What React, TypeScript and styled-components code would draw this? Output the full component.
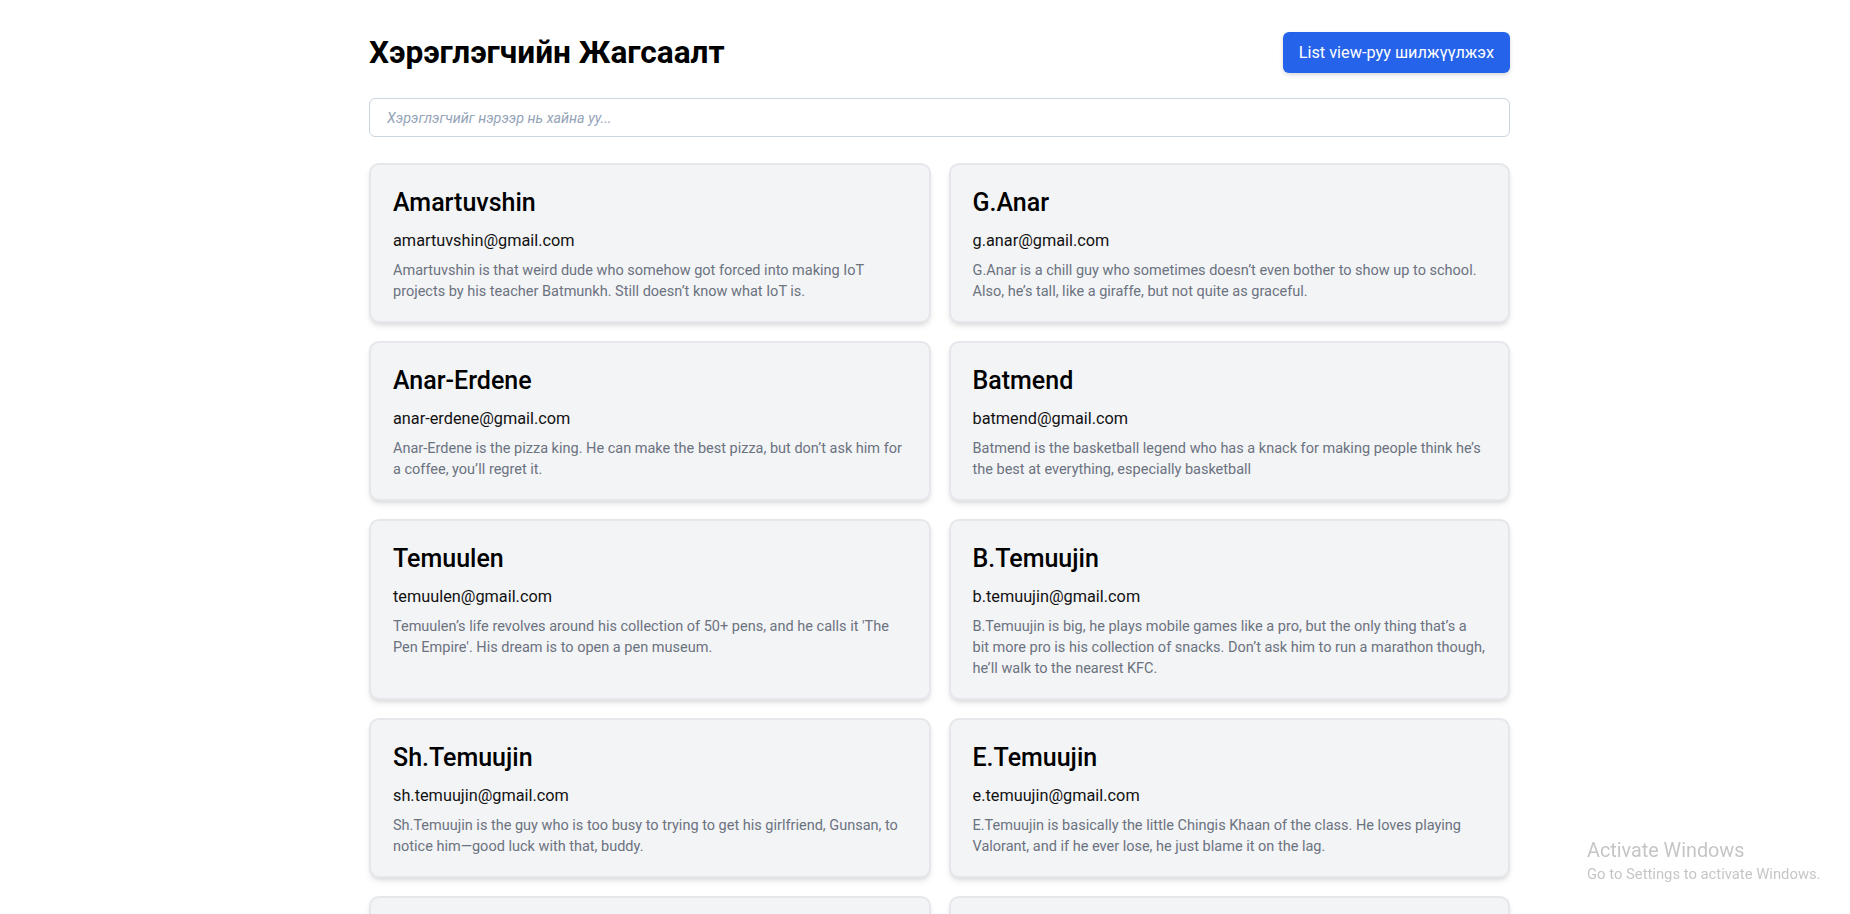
import React from "react";
import styled, { createGlobalStyle } from "styled-components";

const GlobalStyle = createGlobalStyle`
  html, body {
    margin: 0;
    padding: 0;
    background: #ffffff;
    font-family: "Segoe UI", Roboto, "Noto Sans", sans-serif;
    color: #111111;
  }
  * {
    box-sizing: border-box;
  }
`;

const users = [
  {
    name: "Amartuvshin",
    email: "amartuvshin@gmail.com",
    desc: "Amartuvshin is that weird dude who somehow got forced into making IoT projects by his teacher Batmunkh. Still doesn’t know what IoT is.",
  },
  {
    name: "G.Anar",
    email: "g.anar@gmail.com",
    desc: "G.Anar is a chill guy who sometimes doesn’t even bother to show up to school. Also, he’s tall, like a giraffe, but not quite as graceful.",
  },
  {
    name: "Anar-Erdene",
    email: "anar-erdene@gmail.com",
    desc: "Anar-Erdene is the pizza king. He can make the best pizza, but don’t ask him for a coffee, you’ll regret it.",
  },
  {
    name: "Batmend",
    email: "batmend@gmail.com",
    desc: "Batmend is the basketball legend who has a knack for making people think he’s the best at everything, especially basketball",
  },
  {
    name: "Temuulen",
    email: "temuulen@gmail.com",
    desc: "Temuulen’s life revolves around his collection of 50+ pens, and he calls it 'The Pen Empire'. His dream is to open a pen museum.",
  },
  {
    name: "B.Temuujin",
    email: "b.temuujin@gmail.com",
    desc: "B.Temuujin is big, he plays mobile games like a pro, but the only thing that’s a bit more pro is his collection of snacks. Don’t ask him to run a marathon though, he’ll walk to the nearest KFC.",
  },
  {
    name: "Sh.Temuujin",
    email: "sh.temuujin@gmail.com",
    desc: "Sh.Temuujin is the guy who is too busy to trying to get his girlfriend, Gunsan, to notice him—good luck with that, buddy.",
  },
  {
    name: "E.Temuujin",
    email: "e.temuujin@gmail.com",
    desc: "E.Temuujin is basically the little Chingis Khaan of the class. He loves playing Valorant, and if he ever lose, he just blame it on the lag.",
  },
  {
    name: "Bilguun",
    email: "bilguun@gmail.com",
    desc: "Bilguun is always the last one to leave the lab, mostly because he forgot where he put his charger.",
  },
  {
    name: "Tuguldur",
    email: "tuguldur@gmail.com",
    desc: "Tuguldur knows every shortcut in the code editor, but still uses the mouse for everything.",
  },
];

const Page = styled.div`
  width: 1141px;
  margin-left: 369px;
  padding: 32px 0 40px;
`;

const Header = styled.header`
  display: flex;
  justify-content: space-between;
  align-items: center;
  margin-bottom: 25px;
`;

const Title = styled.h1`
  margin: 0;
  font-size: 31.6px;
  font-weight: 700;
  line-height: 41px;
  color: #000000;
`;

const ToggleButton = styled.button`
  height: 41px;
  padding: 0 16px;
  border: none;
  border-radius: 6px;
  background: #2563eb;
  color: #ffffff;
  font-family: inherit;
  font-size: 16.3px;
  box-shadow: 0 2px 4px rgba(0, 0, 0, 0.15);
  cursor: pointer;
`;

const SearchInput = styled.input`
  display: block;
  width: 100%;
  height: 39px;
  padding: 0 17px;
  margin-bottom: 26px;
  border: 1px solid #cbd5e1;
  border-radius: 6px;
  font-family: inherit;
  font-size: 14.3px;
  color: #111111;
  outline: none;
  &::placeholder {
    color: #94a3b8;
    font-style: italic;
  }
`;

const Grid = styled.div`
  display: grid;
  grid-template-columns: 1fr 1fr;
  gap: 18px;
`;

const Card = styled.div`
  background: #f3f4f6;
  border: 2px solid #e5e7eb;
  border-radius: 10px;
  padding: 22px 22px 19px;
  box-shadow: 0 4px 6px -1px rgba(0, 0, 0, 0.1),
    0 2px 4px -2px rgba(0, 0, 0, 0.1);
`;

const Name = styled.h2`
  margin: 0 0 10px;
  font-size: 25px;
  font-weight: 500;
  line-height: 32px;
  color: #000000;
`;

const Email = styled.p`
  margin: 0 0 7px;
  font-size: 16.3px;
  line-height: 24px;
  color: #111111;
`;

const Desc = styled.p`
  margin: 0;
  font-size: 14.5px;
  line-height: 21px;
  color: #6b7280;
`;

const Watermark = styled.div`
  position: fixed;
  left: 1587px;
  top: 838px;
  color: rgba(150, 150, 150, 0.55);
  font-family: "Segoe UI", Roboto, sans-serif;
  pointer-events: none;
`;

const WatermarkTitle = styled.div`
  font-size: 19.8px;
  line-height: 26px;
`;

const WatermarkNote = styled.div`
  font-size: 14.8px;
  line-height: 20px;
`;

export default function App() {
  return (
    <>
      <GlobalStyle />
      <Page>
        <Header>
          <Title>Хэрэглэгчийн Жагсаалт</Title>
          <ToggleButton>List view-руу шилжүүлжэх</ToggleButton>
        </Header>
        <SearchInput placeholder="Хэрэглэгчийг нэрээр нь хайна уу..." />
        <Grid>
          {users.map((u) => (
            <Card key={u.email}>
              <Name>{u.name}</Name>
              <Email>{u.email}</Email>
              <Desc>{u.desc}</Desc>
            </Card>
          ))}
        </Grid>
      </Page>
      <Watermark>
        <WatermarkTitle>Activate Windows</WatermarkTitle>
        <WatermarkNote>Go to Settings to activate Windows.</WatermarkNote>
      </Watermark>
    </>
  );
}
